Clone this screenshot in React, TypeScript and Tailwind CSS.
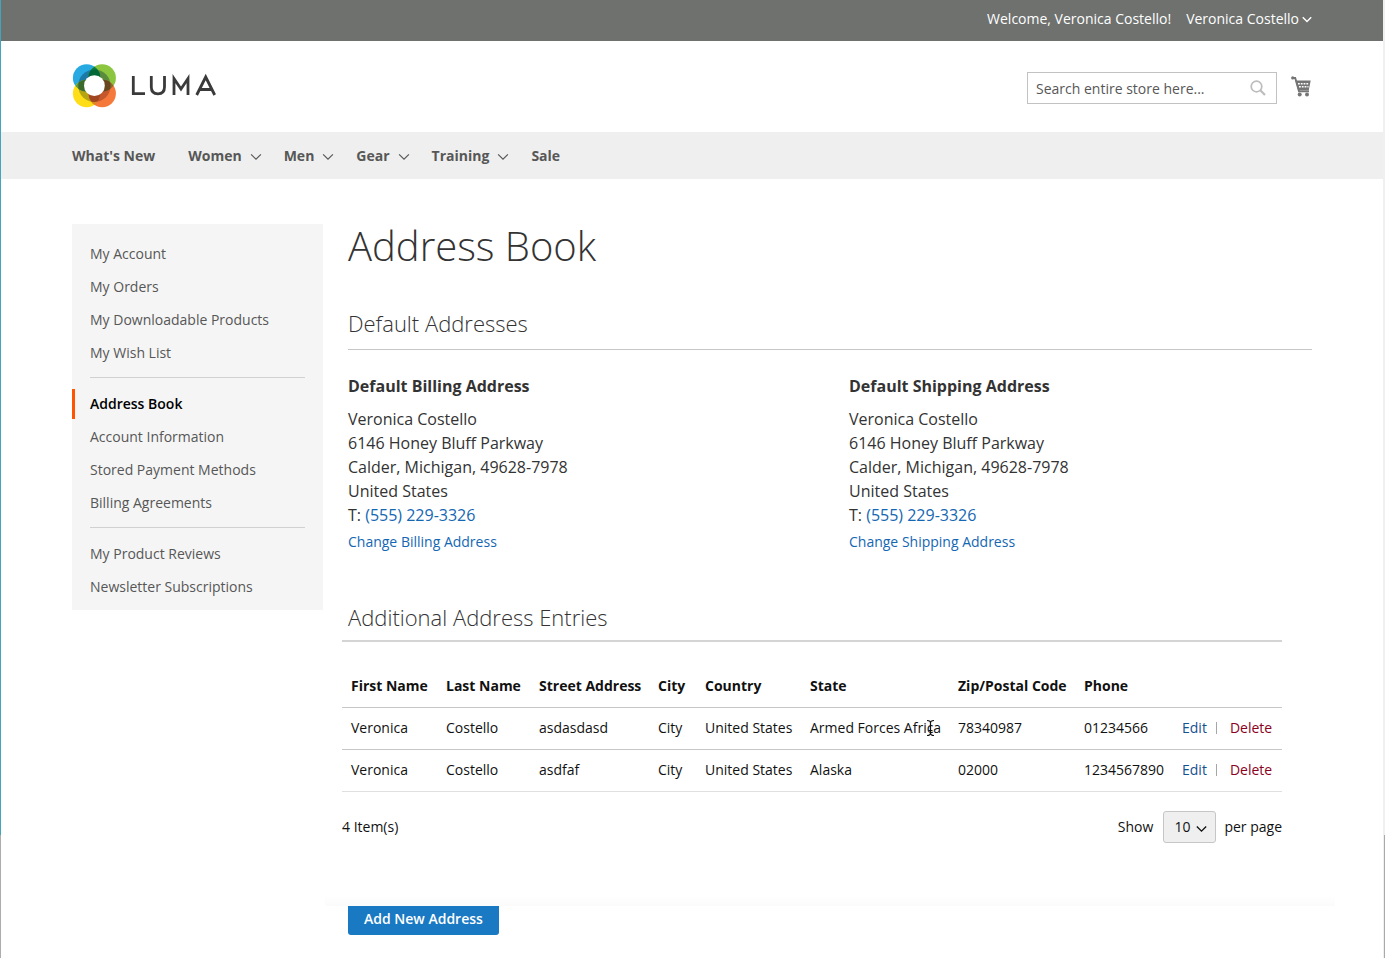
import type { ReactNode } from "react";

function Chevron({ className, stroke = 1.3 }: { className: string; stroke?: number }) {
  return (
    <svg viewBox="0 0 13 9" className={className} fill="none" stroke="currentColor" strokeWidth={stroke} aria-hidden="true">
      <path d="M1 1.5 6.5 7 12 1.5" />
    </svg>
  );
}

const petals = [
  { id: "tl", x: 14.2, y: 14.2, fill: "#27a9e1", inner: "#1b7aa6" },
  { id: "tr", x: 29.8, y: 14.2, fill: "#8cc63f", inner: "#5b8c3c" },
  { id: "bl", x: 14.2, y: 29.8, fill: "#ffde17", inner: "#b5a512" },
  { id: "br", x: 29.8, y: 29.8, fill: "#f4793b", inner: "#c4572b" },
];

const overlaps = [
  { clip: "tl", x: 29.8, y: 14.2, fill: "#0b7a45", inner: "#006837" },
  { clip: "tl", x: 14.2, y: 29.8, fill: "#5f9a3c", inner: "#3a6a2e" },
  { clip: "tr", x: 29.8, y: 29.8, fill: "#8a6a2e", inner: "#68471f" },
  { clip: "bl", x: 29.8, y: 29.8, fill: "#dc8a20", inner: "#a04722" },
];

function Logo() {
  return (
    <a href="#" aria-label="Luma" className="pb-0.5 text-[#333]">
      <svg viewBox="0 0 146 44" className="h-11 w-[146px]" aria-hidden="true">
        <defs>
          <clipPath id="luma-core">
            <circle cx="22" cy="22" r="16.2" />
          </clipPath>
          {petals.map((p) => (
            <clipPath key={p.id} id={`luma-${p.id}`}>
              <circle cx={p.x} cy={p.y} r="13.7" />
            </clipPath>
          ))}
        </defs>
        <g transform="translate(0.4 -0.3)">
          {petals.map((p) => (
            <circle key={p.id} cx={p.x} cy={p.y} r="13.7" fill={p.fill} />
          ))}
          <g clipPath="url(#luma-core)">
            {petals.map((p) => (
              <circle key={p.id} cx={p.x} cy={p.y} r="13.7" fill={p.inner} />
            ))}
          </g>
          {overlaps.map((o) => (
            <g key={o.fill} clipPath={`url(#luma-${o.clip})`}>
              <circle cx={o.x} cy={o.y} r="13.7" fill={o.fill} />
              <g clipPath="url(#luma-core)">
                <circle cx={o.x} cy={o.y} r="13.7" fill={o.inner} />
              </g>
            </g>
          ))}
          <circle cx="22" cy="22" r="10.4" fill="#fff" />
        </g>
        <g fill="none" stroke="#3a3a3a" strokeWidth="2.8">
          <path d="M61.3 12V29.7H73" />
          <path d="M79.3 12V23C79.3 27.5 82 29.8 85.9 29.8S92.5 27.5 92.5 23V12" />
          <path d="M102 31V14.5L109 25 116 14.5V31" />
          <path d="M124.7 31 133.7 13 142.7 31M128 25.5H139" />
        </g>
      </svg>
    </a>
  );
}

function CartIcon() {
  return (
    <svg viewBox="0 0 20 21" className="mb-[3px] h-[21px] w-5" fill="none" stroke="#757575" aria-hidden="true">
      <circle cx="1.7" cy="1.9" r="1.6" fill="#757575" stroke="none" />
      <path d="M1.5 2H4.2L8 15.2H18" strokeWidth="1.9" />
      <path d="M4.5 4.6H19.7L17.8 14H7Z" fill="#757575" stroke="none" />
      <path d="M7 7.7H18M8 10.7H17.5" stroke="#fff" strokeWidth="1.4" strokeDasharray="1.8 1" />
      <circle cx="8.7" cy="18.5" r="2" fill="#757575" stroke="none" />
      <circle cx="16" cy="18.5" r="2" fill="#757575" stroke="none" />
    </svg>
  );
}

const navItems = [
  { label: "What's New", menu: false },
  { label: "Women", menu: true },
  { label: "Men", menu: true },
  { label: "Gear", menu: true },
  { label: "Training", menu: true },
  { label: "Sale", menu: false },
];

const sideGroups = [
  ["My Account", "My Orders", "My Downloadable Products", "My Wish List"],
  ["Address Book", "Account Information", "Stored Payment Methods", "Billing Agreements"],
  ["My Product Reviews", "Newsletter Subscriptions"],
];

function AddressCard({ kind }: { kind: string }) {
  return (
    <div>
      <h3 className="text-base leading-6 font-bold">Default {kind} Address</h3>
      <address className="mt-[9px] text-base leading-6 not-italic">
        Veronica Costello
        <br />
        6146 Honey Bluff Parkway
        <br />
        Calder, Michigan, 49628-7978
        <br />
        United States
        <br />
        T: <a href="#" className="text-[#1467b3]">(555) 229-3326</a>
      </address>
      <a href="#" className="mt-[5px] block text-sm leading-5 text-[#1467b3]">Change {kind} Address</a>
    </div>
  );
}

const rows = [
  ["Veronica", "Costello", "asdasdasd", "City", "United States", "Armed Forces Africa", "78340987", "01234566"],
  ["Veronica", "Costello", "asdfaf", "City", "United States", "Alaska", "02000", "1234567890"],
];

function Head({ className, children }: { className: string; children?: ReactNode }) {
  return <th scope="col" className={`pl-[9px] font-bold ${className}`}>{children}</th>;
}

function TextCursor() {
  return (
    <svg viewBox="0 0 9 17" className="absolute top-1/2 right-1.5 h-[17px] w-[9px] -translate-y-1/2" fill="none" stroke="#111" strokeWidth="1.2" aria-hidden="true">
      <path d="M1 1C3 1 4.5 1.8 4.5 3.5V13.5C4.5 15.2 3 16 1 16M8 1C6 1 4.5 1.8 4.5 3.5M4.5 13.5C4.5 15.2 6 16 8 16M2.5 11H6.5" />
    </svg>
  );
}

export default function App() {
  return (
    <div className="flex min-h-screen bg-white font-['Open_Sans','Noto_Sans',sans-serif] text-sm text-[#333]">
      <div className="flex w-px shrink-0 flex-col">
        <div className="h-[835px] bg-[#42a5bd]" />
        <div className="flex-1 bg-[#adadad]" />
      </div>

      <div className="min-w-0 flex-1">
        <header>
          <div className="bg-[#6e716e] text-white">
            <div className="mx-auto flex h-[41px] max-w-[1280px] justify-end gap-[15px] px-5 pt-[9px] leading-5">
              <span>Welcome, Veronica Costello!</span>
              <button type="button" className="flex h-5 items-center gap-[3px]">
                Veronica Costello
                <Chevron className="h-[7px] w-2.5" stroke={1.9} />
              </button>
            </div>
          </div>
          <div className="mx-auto flex h-[91px] max-w-[1280px] items-center justify-between px-5">
            <Logo />
            <div className="flex items-center gap-[14px] pt-[3px]">
              <form className="flex h-8 w-[250px] items-center border border-[#c2c2c2] bg-white">
                <input
                  type="search"
                  aria-label="Search"
                  placeholder="Search entire store here..."
                  className="h-full min-w-0 flex-1 pt-px pl-2 text-sm outline-none placeholder:text-[#575757]"
                />
                <button type="submit" aria-label="Search" className="mr-2.5">
                  <svg viewBox="0 0 16 16" className="size-4" fill="none" stroke="#bdbdbd" strokeWidth="1.7" aria-hidden="true">
                    <circle cx="6.5" cy="6.5" r="5.3" />
                    <path d="M10.3 10.3 15 15" strokeWidth="2.2" />
                  </svg>
                </button>
              </form>
              <a href="#" aria-label="Cart" className="mr-px">
                <CartIcon />
              </a>
            </div>
          </div>
        </header>

        <nav className="bg-[#efefef]">
          <ul className="mx-auto flex h-[47px] max-w-[1280px] items-center px-5 font-bold text-[#575757]">
            {navItems.map((n) => (
              <li key={n.label} className={n.menu ? "mr-[22px]" : "mr-[33px]"}>
                <a href="#" className="flex items-center gap-2">
                  {n.label}
                  {n.menu && <Chevron className="mt-0.5 h-2 w-3" />}
                </a>
              </li>
            ))}
          </ul>
        </nav>

        <div className="mx-auto flex max-w-[1280px] items-start gap-[25px] px-5 pt-[45px]">
          <aside className="w-[251px] shrink-0 bg-[#f5f5f5] pt-[13px] pb-[7px]">
            {sideGroups.map((group, i) => (
              <ul key={group[0]} className="text-[#575757]">
                {i > 0 && <li role="separator" className="mx-[18px] mt-2 mb-[9px] border-t border-[#d1d1d1]" />}
                {group.map((item) => (
                  <li key={item} className="flex h-[33px] items-center">
                    {item === "Address Book" ? (
                      <a href="#" aria-current="page" className="border-l-3 border-[#ff5501] py-[5px] pl-[15px] leading-5 font-semibold text-black">
                        {item}
                      </a>
                    ) : (
                      <a href="#" className="pl-[18px] leading-5">{item}</a>
                    )}
                  </li>
                ))}
              </ul>
            ))}
          </aside>

          <main className="min-w-0 flex-1">
            <h1 className="text-[40px] leading-11 font-light">Address Book</h1>

            <section>
              <h2 className="mt-[39px] border-b border-[#c6c6c6] pb-2.5 text-[22px] leading-8 font-light">Default Addresses</h2>
              <div className="mt-6 grid grid-cols-2 gap-[38px]">
                <AddressCard kind="Billing" />
                <AddressCard kind="Shipping" />
              </div>
            </section>

            <section className="mt-[49px] mr-[30px] -ml-1.5 text-[#111]">
              <h2 className="border-b-2 border-[#d4d4d4] pb-[7px] pl-1.5 text-[22px] leading-8 font-light text-[#333]">Additional Address Entries</h2>
              <table className="mt-[23px] w-full table-fixed border-collapse text-left whitespace-nowrap">
                <thead>
                  <tr className="h-[42px] border-b border-[#c6c6c6]">
                    <Head className="w-[95px]">First Name</Head>
                    <Head className="w-[93px]">Last Name</Head>
                    <Head className="w-[119px]">Street Address</Head>
                    <Head className="w-[47px]">City</Head>
                    <Head className="w-[105px]">Country</Head>
                    <Head className="w-[148px]">State</Head>
                    <Head className="w-[126px]">Zip/Postal Code</Head>
                    <Head className="w-[98px]">Phone</Head>
                    <td />
                  </tr>
                </thead>
                <tbody>
                  {rows.map((row) => (
                    <tr key={row[7]} className="h-[42px] border-b border-[#c6c6c6] last:border-[#e0e0e0]">
                      {row.map((cell, c) => (
                        <td key={c} className="pl-[9px]">
                          {cell === "Armed Forces Africa" ? (
                            <span className="relative">
                              {cell}
                              <TextCursor />
                            </span>
                          ) : (
                            cell
                          )}
                        </td>
                      ))}
                      <td className="pl-[9px]">
                        <div className="flex items-center">
                          <a href="#" className="text-[#15508f]">Edit</a>
                          <span className="mr-[13px] ml-[9px] h-3 w-px bg-[#a6a6a6]" />
                          <a href="#" className="text-[#8c0020]">Delete</a>
                        </div>
                      </td>
                    </tr>
                  ))}
                </tbody>
              </table>

              <div className="mt-[19px] flex items-center justify-between">
                <span>4 Item(s)</span>
                <div className="flex items-center">
                  <label htmlFor="page-size">Show</label>
                  <div className="relative mr-2 ml-2.5">
                    <select
                      id="page-size"
                      defaultValue="10"
                      className="block h-8 w-[53px] appearance-none rounded-[3px] border border-[#c6c6c6] bg-[#efefef] pl-2.5 text-sm"
                    >
                      <option>10</option>
                      <option>20</option>
                      <option>50</option>
                    </select>
                    <Chevron className="pointer-events-none absolute top-3.5 right-[9px] h-2 w-[11px]" stroke={1.6} />
                  </div>
                  <span>per page</span>
                </div>
              </div>
            </section>

            <div className="mt-[52px] -mr-[23px] -ml-[23px] h-[11px] bg-linear-to-b from-white to-[#fbfbfb]" />
            <button type="button" className="mb-[22px] block h-[29px] rounded-b-[3px] bg-[#1979c3] px-4 pb-0.5 leading-5 font-semibold text-white">
              Add New Address
            </button>
          </main>
        </div>
      </div>

      <div className="flex w-0.5 shrink-0 flex-col">
        <div className="h-[835px] bg-[#f0f0f0]" />
        <div className="flex-1 border-l border-[#f0f0f0] bg-[#a9a9a9]" />
      </div>
    </div>
  );
}
